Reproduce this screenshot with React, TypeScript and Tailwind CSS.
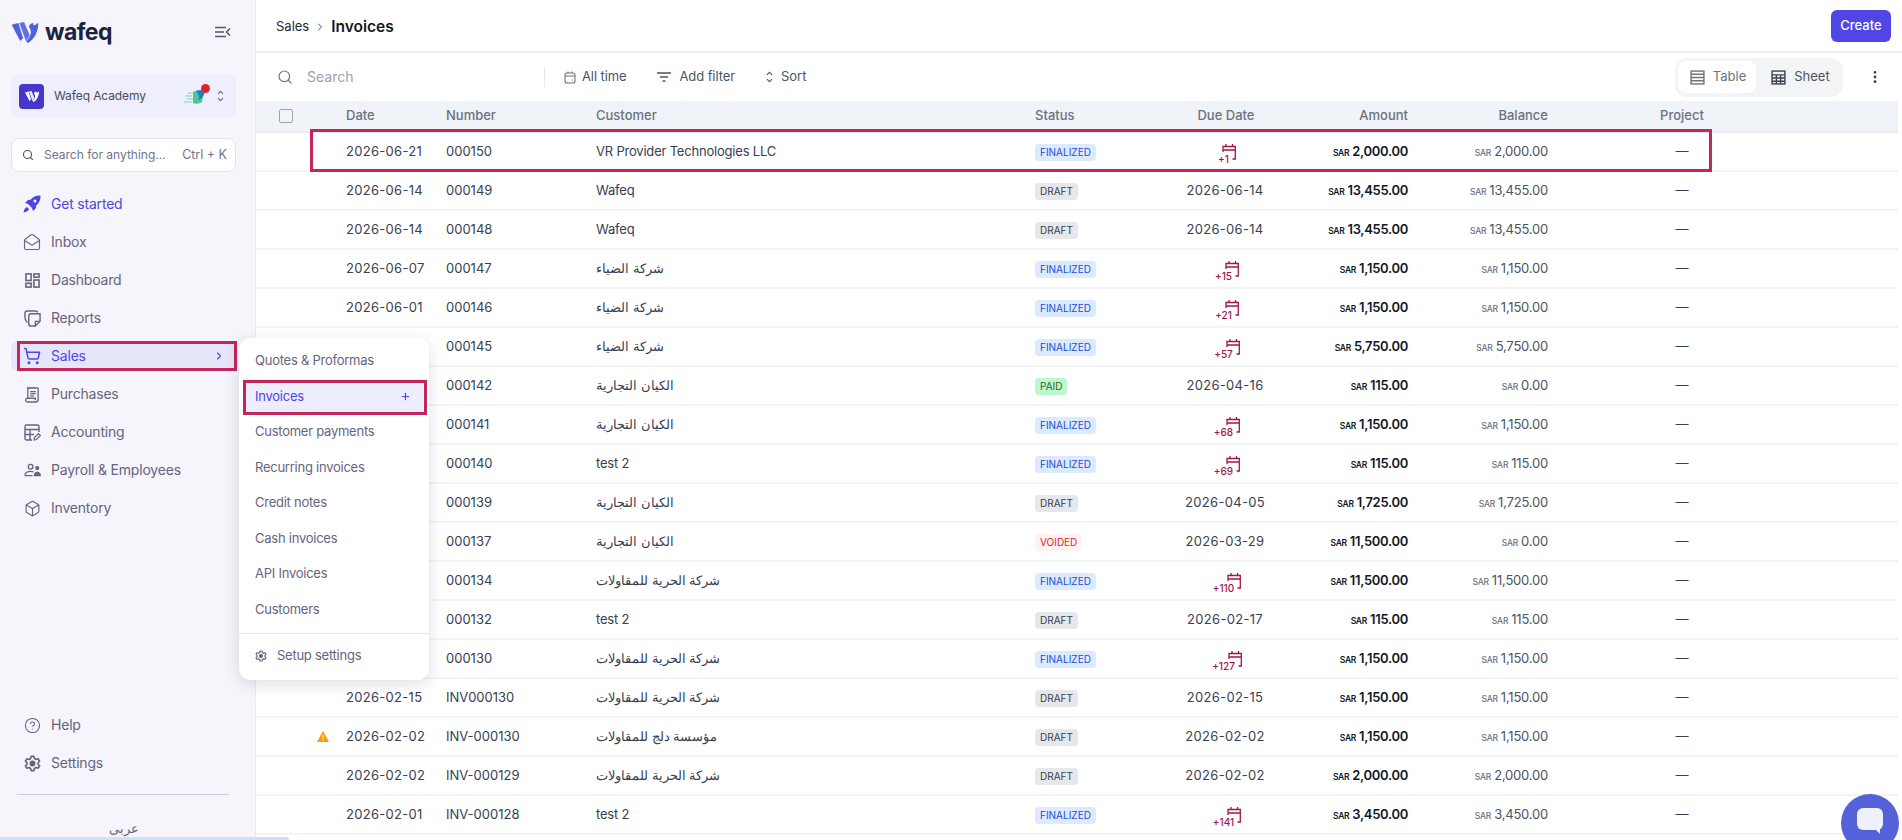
import React from 'react';
import {
  Box,
  ChevronRight,
  CircleHelp,
  EllipsisVertical,
  MailOpen,
  Plus,
  Search,
  ShoppingCart,
} from 'lucide-react';

type Status = 'FINALIZED' | 'DRAFT' | 'PAID' | 'VOIDED';

type Invoice = {
  date: string;
  number: string;
  customer: string;
  status: Status;
  due?: string;
  late?: number;
  amount: string;
  balance: string;
  warn?: boolean;
};

const DIAA = 'شركة الضياء';
const KAYAN = 'الكيان التجارية';
const HURRIYA = 'شركة الحرية للمقاولات';

const invoices: Invoice[] = [
  { date: '2026-06-21', number: '000150', customer: 'VR Provider Technologies LLC', status: 'FINALIZED', late: 1, amount: '2,000.00', balance: '2,000.00' },
  { date: '2026-06-14', number: '000149', customer: 'Wafeq', status: 'DRAFT', due: '2026-06-14', amount: '13,455.00', balance: '13,455.00' },
  { date: '2026-06-14', number: '000148', customer: 'Wafeq', status: 'DRAFT', due: '2026-06-14', amount: '13,455.00', balance: '13,455.00' },
  { date: '2026-06-07', number: '000147', customer: DIAA, status: 'FINALIZED', late: 15, amount: '1,150.00', balance: '1,150.00' },
  { date: '2026-06-01', number: '000146', customer: DIAA, status: 'FINALIZED', late: 21, amount: '1,150.00', balance: '1,150.00' },
  { date: '', number: '000145', customer: DIAA, status: 'FINALIZED', late: 57, amount: '5,750.00', balance: '5,750.00' },
  { date: '', number: '000142', customer: KAYAN, status: 'PAID', due: '2026-04-16', amount: '115.00', balance: '0.00' },
  { date: '', number: '000141', customer: KAYAN, status: 'FINALIZED', late: 68, amount: '1,150.00', balance: '1,150.00' },
  { date: '', number: '000140', customer: 'test 2', status: 'FINALIZED', late: 69, amount: '115.00', balance: '115.00' },
  { date: '', number: '000139', customer: KAYAN, status: 'DRAFT', due: '2026-04-05', amount: '1,725.00', balance: '1,725.00' },
  { date: '', number: '000137', customer: KAYAN, status: 'VOIDED', due: '2026-03-29', amount: '11,500.00', balance: '0.00' },
  { date: '', number: '000134', customer: HURRIYA, status: 'FINALIZED', late: 110, amount: '11,500.00', balance: '11,500.00' },
  { date: '', number: '000132', customer: 'test 2', status: 'DRAFT', due: '2026-02-17', amount: '115.00', balance: '115.00' },
  { date: '', number: '000130', customer: HURRIYA, status: 'FINALIZED', late: 127, amount: '1,150.00', balance: '1,150.00' },
  { date: '2026-02-15', number: 'INV000130', customer: HURRIYA, status: 'DRAFT', due: '2026-02-15', amount: '1,150.00', balance: '1,150.00' },
  { date: '2026-02-02', number: 'INV-000130', customer: 'مؤسسة دلج للمقاولات', status: 'DRAFT', due: '2026-02-02', amount: '1,150.00', balance: '1,150.00', warn: true },
  { date: '2026-02-02', number: 'INV-000129', customer: HURRIYA, status: 'DRAFT', due: '2026-02-02', amount: '2,000.00', balance: '2,000.00' },
  { date: '2026-02-01', number: 'INV-000128', customer: 'test 2', status: 'FINALIZED', late: 141, amount: '3,450.00', balance: '3,450.00' },
];

const statusStyles: Record<Status, string> = {
  FINALIZED: 'bg-[#dbeafe] text-[#1d4ed8]',
  DRAFT: 'bg-[#e5e7eb] text-[#374151]',
  PAID: 'bg-[#bbf7d0] text-[#3f6212]',
  VOIDED: 'bg-[#fef2f2] text-[#dc2626]',
};

const COLS = 'grid grid-cols-[90px_100px_150px_439px_110px_160px_103px_140px_268px_1fr] items-center';

function WafeqMark({ className, color }: { className?: string; color: string }) {
  return (
    <svg viewBox="0 0 28 22" className={className} fill={color}>
      <path d="M0 3 L7 1 L12 17 L9 20 Z" />
      <path d="M8 1 L13 0 L19 14 L15 20 Z" opacity="0.9" />
      <path d="M18 5 C19 2 21 1 23 1 C22 3 23 4 25 3 C26 2 27 1 28 1 C28 10 24 18 17 22 C16 21 15 20 15 20 C20 16 22 10 18 5 Z" />
    </svg>
  );
}

function CollapseIcon() {
  return (
    <svg viewBox="0 0 16 12" className="h-3 w-4 text-[#55536d]" fill="none" stroke="currentColor" strokeWidth="1.5">
      <path d="M0 1.5h11M0 6h9M0 10.5h11M15 2.5L11.5 6 15 9.5" />
    </svg>
  );
}

function RocketIcon() {
  return (
    <svg viewBox="0 0 18 18" className="h-[18px] w-[18px] text-[#4f46e5]" fill="currentColor">
      <path d="M17.5.5c-4-.3-7.500 1.200-10 4.300L5 5 2 8l3 1 4 4 1 3 3-3 .2-2.500c3.100-2.500 4.600-6 4.300-10.500zM12 7.500a1.500 1.500 0 1 1 0-3 1.500 1.500 0 0 1 0 3z" />
      <path d="M4 12c-2 .5-3 2.500-3.500 5.500C3.500 17 5.500 16 6 14z" />
    </svg>
  );
}

function DashboardIcon() {
  return (
    <svg viewBox="0 0 16 16" className="h-[15px] w-[15px]" fill="none" stroke="currentColor" strokeWidth="1.7">
      <rect x="1" y="1" width="5.500" height="7" />
      <rect x="1" y="11" width="5.500" height="4" />
      <rect x="9.500" y="1" width="5.500" height="3.500" />
      <rect x="9.500" y="7.500" width="5.500" height="7.500" />
    </svg>
  );
}

function ReportsIcon() {
  return (
    <svg viewBox="0 0 18 18" className="h-[17px] w-[17px]" fill="none" stroke="currentColor" strokeWidth="1.5" strokeLinejoin="round">
      <path d="M3.500 13.500C2 12 1 10.500 1 8V3.500C1 2 2 1 3.500 1H12c1 0 2 .5 2.500 1.500" />
      <path d="M5 6.500C5 5 6 4 7.500 4H17v8l-5 5H7.500C6 17 5 16 5 14.500z" />
      <path d="M17 12h-5v5" />
    </svg>
  );
}

function PurchasesIcon() {
  return (
    <svg viewBox="0 0 16 18" className="h-[17px] w-[15px]" fill="none" stroke="currentColor" strokeWidth="1.4" strokeLinejoin="round">
      <path d="M3 13V1.500l1.500 1 1.500-1 1.500 1 1.500-1 1.500 1 1.500-1 2 1V14c0 1.500-1 3-2.500 3H2.500C1.500 17 .7 16 .7 15s.8-2 1.800-2h8.500v2" />
      <path d="M5.500 6h6M5.500 8h6M5.500 10.500h4" />
    </svg>
  );
}

function AccountingIcon() {
  return (
    <svg viewBox="0 0 17 17" className="h-[17px] w-[17px]" fill="none" stroke="currentColor" strokeWidth="1.400">
      <path d="M8 16H2.500A1.500 1.500 0 0 1 1 14.500v-12A1.500 1.500 0 0 1 2.500 1h11A1.500 1.500 0 0 1 15 2.500V8" />
      <path d="M1 5.500h14M6 5.500V16M1 10.500h9" />
      <path d="M10 16l.5-2.500 4-4 2 2-4 4z" strokeWidth="1.200" />
    </svg>
  );
}

function PayrollIcon() {
  return (
    <svg viewBox="0 0 18 14" className="h-[14px] w-[17px]" fill="none" stroke="currentColor" strokeWidth="1.400">
      <circle cx="7" cy="3.500" r="2.500" />
      <path d="M1 13c0-2.800 2.500-4.500 6-4.500 1.200 0 2.300.2 3.200.6M1 13h8" />
      <circle cx="14" cy="5" r="1.500" fill="currentColor" />
      <path d="M11 12.800c.2-2 1.500-3.300 3-3.300s3 1.300 3.200 3.300z" fill="currentColor" />
    </svg>
  );
}

function GearIcon({ className }: { className: string }) {
  return (
    <svg viewBox="0 0 24 24" className={className} fill="none" stroke="currentColor" strokeWidth="2.300" strokeLinejoin="round">
      <path d="M10 2h4l.7 3 2.300 1.300 3-.9 2 3.400-2.200 2.100v2.200l2.200 2.100-2 3.400-3-.9L14.700 19l-.7 3h-4l-.7-3L7 17.700l-3 .9-2-3.400 2.200-2.100v-2.200L2 8.800l2-3.400 3 .9L9.300 5z" />
      <circle cx="12" cy="12" r="3" fill="currentColor" />
    </svg>
  );
}

function CalendarSmall() {
  return (
    <svg viewBox="0 0 14 16" className="relative -ml-[7px] h-4 w-[14px] shrink-0" fill="none" stroke="currentColor" strokeWidth="1.300">
      <path d="M4 0v3M10.500 0v3M1 8V2.500h12.300V15H10.500M1 6h12.300" />
    </svg>
  );
}

function LateBadge({ days }: { days: number }) {
  return (
    <span className="inline-flex items-end pl-1 tracking-normal text-[#a3154a]">
      <span className="relative z-10 translate-y-[4px] bg-white text-[10px] leading-[10px] font-medium">+{days}</span>
      <CalendarSmall />
    </span>
  );
}

function SpriteIcon() {
  return (
    <span className="relative h-[22px] w-[24px]">
      <svg viewBox="0 0 24 22" className="h-[22px] w-[24px]">
        <path d="M1 11h7M3 14h6M0 17h8M4 8h5" stroke="#7fd6b4" strokeWidth="1.200" />
        <path d="M9 7c3-2 7-2 11-1l-2 11c-3 2-6 2-9 1z" fill="#52c49a" />
        <path d="M12 6c3-1 6-1 9 0-1 5-3 8-7 9 2-3 1-6-2-9z" fill="#1d7fc4" />
      </svg>
      <span className="absolute top-[-1px] right-[-2px] h-[9px] w-[9px] rounded-full bg-[#e02424]" />
    </span>
  );
}

function NavItem({ icon, label, active, children }: { icon: React.ReactNode; label: string; active?: boolean; children?: React.ReactNode }) {
  return (
    <div className={`flex h-[30px] items-center rounded-md pl-3 text-[14px] tracking-[-0.2px] ${active ? 'text-[#4f46e5]' : 'text-[#67647f]'}`}>
      <span className="flex w-[18px] justify-center">{icon}</span>
      <span className="ml-[10px] pb-[1px]">{label}</span>
      {children}
    </div>
  );
}

function SalesMenu() {
  const links = ['Customer payments', 'Recurring invoices', 'Credit notes', 'Cash invoices', 'API Invoices', 'Customers'];
  return (
    <div className="absolute top-[-3px] left-[228px] z-30 flex h-[342px] w-[190px] flex-col rounded-xl bg-white pt-[5px] text-[13px] tracking-[-0.25px] text-[#67647f] shadow-[0_4px_16px_rgba(30,30,60,0.14)]">
      <div className="flex h-[35.5px] items-center pl-4">Quotes &amp; Proformas</div>
      <div className="relative mr-[2px] ml-1 flex h-[35.5px] items-center justify-between bg-[#ededfc] pr-4 pl-3 text-[#4f46e5]">
        <span>Invoices</span>
        <Plus size={11} strokeWidth={2.500} />
        <div className="absolute inset-x-0 top-[1px] bottom-[-1px] border-[3px] border-[#c4255c]" />
      </div>
      {links.map((link) => (
        <div key={link} className="flex h-[35.5px] items-center pl-4">
          {link}
        </div>
      ))}
      <div className="mt-[6px] flex flex-1 items-center gap-[10px] border-t border-[#e5e7eb] pb-[2px] pl-4">
        <GearIcon className="h-3 w-3" />
        <span>Setup settings</span>
      </div>
    </div>
  );
}

function Sidebar() {
  return (
    <aside className="flex h-full w-[256px] shrink-0 flex-col border-r border-[#e9e9f1] bg-[#f5f5fb] pr-[19px] pl-[11px]">
      <div className="flex h-[74px] items-start justify-between pt-[21px] pr-[5px]">
        <div className="flex items-center gap-[6px]">
          <WafeqMark className="h-[21px] w-[28px]" color="#4f62dd" />
          <span className="text-[23px] leading-[22px] font-bold tracking-tight text-[#1b2340]">wafeq</span>
        </div>
        <div className="pt-[5px]">
          <CollapseIcon />
        </div>
      </div>
      <div className="flex h-[44px] w-[225px] items-center rounded-lg bg-[#eeeefc] pr-3 pl-2">
        <span className="flex h-[25px] w-[25px] items-center justify-center rounded bg-[#4338ca]">
          <WafeqMark className="h-[11px] w-[14px]" color="#ffffff" />
        </span>
        <span className="ml-[10px] flex-1 text-[12px] tracking-[-0.1px] text-[#4a4862]">Wafeq Academy</span>
        <SpriteIcon />
        <svg viewBox="0 0 8 14" className="ml-[9px] h-3 w-[7px] text-[#6b7280]" fill="none" stroke="currentColor" strokeWidth="1.300">
          <path d="M1 4.500L4 1.500l3 3M1 9.500l3 3 3-3" />
        </svg>
      </div>
      <div className="mt-5 flex h-[34px] w-[225px] items-center rounded-lg border border-[#e2e2ec] bg-white pr-2 pl-[10px] text-[12px] text-[#6f7488]">
        <Search size={12} strokeWidth={2.200} className="text-[#4b5563]" />
        <span className="ml-[10px] flex-1">Search for anything...</span>
        <span className="text-[12.5px]">Ctrl + K</span>
      </div>
      <nav className="mt-[17px] flex w-[225px] flex-col gap-2">
        <NavItem icon={<RocketIcon />} label="Get started" active />
        <NavItem icon={<MailOpen size={18} strokeWidth={1.500} />} label="Inbox" />
        <NavItem icon={<DashboardIcon />} label="Dashboard" />
        <NavItem icon={<ReportsIcon />} label="Reports" />
        <div className="relative rounded-md bg-[#e6e6fb]">
          <NavItem icon={<ShoppingCart size={18} strokeWidth={2} />} label="Sales" active>
            <ChevronRight size={12} strokeWidth={2.200} className="mr-[11px] ml-auto" />
          </NavItem>
          <div className="absolute inset-y-0 right-[-1px] left-[6px] border-[3px] border-[#c4255c]" />
          <SalesMenu />
        </div>
        <NavItem icon={<PurchasesIcon />} label="Purchases" />
        <NavItem icon={<AccountingIcon />} label="Accounting" />
        <NavItem icon={<PayrollIcon />} label="Payroll & Employees" />
        <NavItem icon={<Box size={17} strokeWidth={1.600} />} label="Inventory" />
      </nav>
      <div className="mt-auto flex w-[225px] flex-col gap-2">
        <NavItem icon={<CircleHelp size={17} strokeWidth={1.500} />} label="Help" />
        <NavItem icon={<GearIcon className="h-[17px] w-[17px]" />} label="Settings" />
      </div>
      <div className="mt-4 ml-[6px] w-[212px] border-t border-[#c9c8dc]" />
      <div className="flex h-[45px] w-[225px] items-center justify-center pt-[22px] text-[13px] text-[#67647f]">عربى</div>
    </aside>
  );
}

function Toolbar() {
  return (
    <div className="flex h-[48px] items-center pr-[19px] pl-[21px] text-[13px] text-[#4b5563]">
      <Search size={16} strokeWidth={1.800} className="text-[#6b7280]" />
      <span className="mb-[2px] ml-[14px] w-[237px] text-[14px] text-[#9ca3af]">Search</span>
      <div className="h-[20px] w-px bg-[#e5e7eb]" />
      <svg viewBox="0 0 12 13" className="ml-[19px] h-[13px] w-[12px] text-[#6b7280]" fill="none" stroke="currentColor" strokeWidth="1.100">
        <rect x="1" y="2" width="10" height="10" rx="2" />
        <path d="M1 5h10M4 .5V2M8 .5V2M8 9h1" />
      </svg>
      <span className="ml-[6px] tracking-[-0.1px]">All time</span>
      <svg viewBox="0 0 14 10" className="ml-[30px] h-[10px] w-[14px] text-[#4b5563]" fill="none" stroke="currentColor" strokeWidth="1.300">
        <path d="M0 1h14M3 5h8M5.500 9h3" />
      </svg>
      <span className="ml-[9px] tracking-[-0.1px]">Add filter</span>
      <svg viewBox="0 0 8 14" className="ml-[31px] h-3 w-[7px] text-[#4b5563]" fill="none" stroke="currentColor" strokeWidth="1.200">
        <path d="M1 4.500L4 1.500l3 3M1 9.500l3 3 3-3" />
      </svg>
      <span className="ml-[8px]">Sort</span>
      <div className="ml-auto flex h-[39px] w-[168px] items-center rounded-xl bg-[#f3f4f6] pl-[3px]">
        <div className="flex h-[32px] w-[78px] items-center justify-center gap-[8px] rounded-lg bg-white pl-[2px] text-[#6b7280]">
          <svg viewBox="0 0 14 14" className="h-[15px] w-[15px]" fill="none" stroke="currentColor" strokeWidth="1.300">
            <rect x="1" y="1" width="12" height="12" />
            <path d="M1 4h12M1 7h12M1 10h12" />
          </svg>
          <span>Table</span>
        </div>
        <div className="flex flex-1 items-center justify-center gap-[8px] pl-[2px] text-[#4b5563]">
          <svg viewBox="0 0 14 14" className="h-[15px] w-[15px] text-[#374151]" fill="none" stroke="currentColor" strokeWidth="1.300">
            <rect x="1" y="1" width="12" height="12" />
            <path d="M1 4.500h12M1 7.500h12M1 10.500h12M5 4.500V13M9 4.500V13" />
          </svg>
          <span>Sheet</span>
        </div>
      </div>
      <EllipsisVertical size={16} strokeWidth={2.200} className="ml-[24px] text-[#374151]" />
    </div>
  );
}

function Row({ inv, outlined }: { inv: Invoice; outlined?: boolean }) {
  return (
    <div className={`${COLS} relative h-[39px] border-b-2 border-[#f3f4f6] text-[13px] text-[#374151]`}>
      <div className="flex justify-end pr-[17px]">
        {inv.warn && (
          <svg viewBox="0 0 12 11" className="h-[11px] w-3">
            <path d="M6 0L12 11H0z" fill="#f59e0b" />
            <path d="M6 4v3.500M6 8.500v1" stroke="#ffffff" strokeWidth="1" />
          </svg>
        )}
      </div>
      <div className="tracking-[0.3px]">{inv.date}</div>
      <div>{inv.number}</div>
      <div className="tracking-[-0.2px]">{inv.customer}</div>
      <div>
        <span className={`inline-flex h-[17px] items-center rounded-[4px] px-[5px] text-[10px] ${statusStyles[inv.status]}`}>{inv.status}</span>
      </div>
      <div className="flex justify-center tracking-[0.3px]">{inv.late ? <LateBadge days={inv.late} /> : inv.due}</div>
      <div className="flex items-baseline justify-end gap-[3px] font-semibold tracking-[-0.3px] text-[#111827]">
        <span className="text-[8.5px]">SAR</span>
        <span>{inv.amount}</span>
      </div>
      <div className="flex items-baseline justify-end gap-[3px] tracking-[-0.2px] text-[#4b5563]">
        <span className="text-[8.5px] font-medium text-[#6b7280]">SAR</span>
        <span>{inv.balance}</span>
      </div>
      <div className="text-center">—</div>
      {outlined && <div className="absolute top-[-4px] bottom-[-2px] left-[54px] w-[1402px] border-[3px] border-[#c4255c]" />}
    </div>
  );
}

export default function App() {
  return (
    <div className="relative flex h-[840px] w-[1902px] overflow-hidden bg-white font-['Inter','Noto_Sans',sans-serif]">
      <Sidebar />
      <main className="flex min-w-0 flex-1 flex-col">
        <header className="flex h-[53px] shrink-0 items-center justify-between border-b-2 border-[#eceef1] pr-[11px] pl-[20px]">
          <div className="flex items-center pt-[2px]">
            <span className="text-[13px] text-[#1f2937]">Sales</span>
            <ChevronRight size={12} className="mx-[5px] text-[#4b5563]" />
            <span className="text-[15.5px] font-semibold text-[#111827]">Invoices</span>
          </div>
          <button className="h-8 w-[60px] rounded-md bg-[#4f46e5] text-[13px] font-medium text-white">Create</button>
        </header>
        <Toolbar />
        <div className="mr-[4px]">
          <div className={`${COLS} h-[32px] border-b-2 border-[#e8ecf3] bg-[#f0f3f8] text-[13px] font-medium text-[#6b7280]`}>
            <div className="pl-[23px]">
              <div className="h-[14px] w-[14px] rounded-[2px] border border-[#9ca3af] bg-[#f3f4f6]" />
            </div>
            <div>Date</div>
            <div>Number</div>
            <div>Customer</div>
            <div>Status</div>
            <div className="pl-[2px] text-center">Due Date</div>
            <div className="text-right">Amount</div>
            <div className="text-right">Balance</div>
            <div className="text-center">Project</div>
          </div>
          {invoices.map((inv, i) => (
            <Row key={inv.number} inv={inv} outlined={i === 0} />
          ))}
        </div>
      </main>
      <div className="absolute top-[794px] right-[3px] flex h-[58px] w-[58px] items-start justify-center rounded-full bg-[#5561d8] pt-[14px]">
        <div className="relative h-[22px] w-[26px] rounded-md bg-[#eef0fa]">
          <div className="absolute right-[3px] bottom-[-4px] h-0 w-0 border-t-[5px] border-l-[5px] border-t-[#eef0fa] border-l-transparent" />
        </div>
      </div>
      <div className="absolute bottom-0 left-0 h-[3px] w-[289px] rounded-tr bg-[#cfe0fb]" />
    </div>
  );
}
